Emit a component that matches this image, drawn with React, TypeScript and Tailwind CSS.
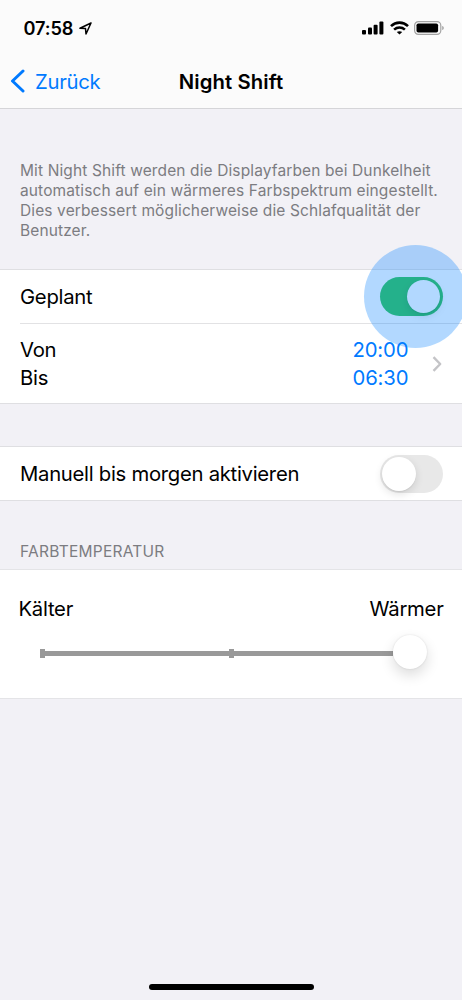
import { useState } from "react";
import clsx from "clsx";

function StatusBar() {
  return (
    <div className="flex h-[54px] items-center justify-between pt-[2px] pr-[17px] pl-[23.5px]">
      <div className="flex items-center gap-[6px]">
        <span className="text-[18.2px] leading-6 font-semibold tracking-[-0.1px]">07:58</span>
        <svg width="13" height="13" viewBox="0 0 13 13" fill="none" stroke="black" strokeWidth="1.5" strokeLinejoin="round">
          <path d="M12 1 L1 6.3 L6.5 6.6 L7 12 Z" />
        </svg>
      </div>
      <div className="flex items-center gap-[5.5px]">
        {/* Signal */}
        <svg width="22" height="14" viewBox="0 0 22 14" fill="black">
          <rect x="0" y="9" width="4" height="4.5" rx="1" />
          <rect x="6" y="6.5" width="4" height="7" rx="1" />
          <rect x="11.6" y="3.7" width="4" height="9.8" rx="1" />
          <rect x="17.4" y="0.5" width="4" height="13" rx="1" />
        </svg>
        {/* Wi-Fi */}
        <svg width="19" height="14" viewBox="0 0 19 14" fill="none" stroke="black" strokeWidth="2.6">
          <path d="M1 5.1 C5.8 0.5 13.2 0.5 18 5.1" />
          <path d="M4.1 8.6 C7.2 5.8 11.8 5.8 14.9 8.6" />
          <path d="M9.5 13.6 L6.8 11.1 C8.3 9.8 10.7 9.8 12.2 11.1 Z" fill="black" stroke="none" />
        </svg>
        {/* Battery */}
        <svg width="31" height="14" viewBox="0 0 31 14">
          <rect x="0.6" y="0.6" width="26.2" height="12.8" rx="3.8" fill="none" stroke="#a3a3a3" strokeWidth="1.2" />
          <rect x="2.5" y="2.4" width="21.6" height="9.2" rx="1.8" fill="black" />
          <path d="M28.2 5 C30.3 5.6 30.3 8.4 28.2 9 Z" fill="#a3a3a3" />
        </svg>
      </div>
    </div>
  );
}

function NavBar() {
  return (
    <div className="grid h-[54px] grid-cols-[1fr_auto_1fr] items-center pt-px">
      <button className="flex items-center gap-[10px] pl-[10px] text-[#007aff]">
        <svg className="mb-px" width="15" height="24" viewBox="0 0 15 24" fill="none" stroke="currentColor" strokeWidth="3" strokeLinecap="round" strokeLinejoin="round">
          <path d="M13 2 L2.5 12 L13 22" />
        </svg>
        <span className="text-[20.3px] leading-7 tracking-[-0.27px]">Zurück</span>
      </button>
      <h1 className="text-[20.3px] leading-7 font-semibold tracking-[0.1px]">Night Shift</h1>
    </div>
  );
}

function Toggle({ checked, label, onChange }: { checked: boolean; label: string; onChange: () => void }) {
  return (
    <button
      role="switch"
      aria-checked={checked}
      aria-label={label}
      onClick={onChange}
      className={clsx(
        "flex h-[38.5px] w-[63px] shrink-0 items-center rounded-full px-[2.5px]",
        checked ? "justify-end bg-[#34c759]" : "justify-start bg-[#e8e8e8]"
      )}
    >
      <span className="size-[33.5px] rounded-full bg-white shadow-[0_3px_8px_rgba(0,0,0,0.12),0_1px_1px_rgba(0,0,0,0.06)]" />
    </button>
  );
}

export default function App() {
  const [scheduled, setScheduled] = useState(true);
  const [manual, setManual] = useState(false);

  return (
    <div className="flex h-[1000px] w-[462px] flex-col overflow-hidden bg-[#f2f1f6] font-['Inter',sans-serif] text-black">
      <header className="h-[109px] border-b border-[#d5d5d8] bg-[#fbfbfb]">
        <StatusBar />
        <NavBar />
      </header>

      <p className="h-[160px] pt-[52.4px] pl-5 text-[15.5px] leading-[19.8px] tracking-[0.12px] whitespace-nowrap text-[#7c7c81]">
        Mit Night Shift werden die Displayfarben bei Dunkelheit
        <br />
        automatisch auf ein wärmeres Farbspektrum eingestellt.
        <br />
        Dies verbessert möglicherweise die Schlafqualität der
        <br />
        Benutzer.
      </p>

      <section className="border-y border-[#dfdfe2] bg-white text-[20.3px] tracking-[-0.27px]">
        <div className="relative ml-5 flex h-[54px] items-center justify-between border-b border-[#e2e2e4] pr-[19.5px]">
          <span className="pt-[2px]">Geplant</span>
          <Toggle label="Geplant" checked={scheduled} onChange={() => setScheduled(!scheduled)} />
          {/* Touch highlight */}
          <div className="pointer-events-none absolute top-[-25px] right-[-5px] size-[103px] rounded-full bg-[#0080ff]/30" />
        </div>
        <div className="flex h-[79px] items-center justify-between pr-[20px] pl-5 leading-[28px]">
          <div>
            <div>Von</div>
            <div>Bis</div>
          </div>
          <div className="flex items-center gap-[23.5px]">
            <div className="text-right tracking-[-0.1px] text-[#007aff]">
              <div>20:00</div>
              <div>06:30</div>
            </div>
            <svg width="10" height="16" viewBox="0 0 10 16" fill="none" stroke="#c4c4c7" strokeWidth="2.4" strokeLinejoin="round">
              <path d="M1.5 1.2 L8.2 8 L1.5 14.8" />
            </svg>
          </div>
        </div>
      </section>

      <section className="mt-[42px] flex h-[55px] items-center justify-between border-y border-[#dfdfe2] bg-white pt-px pr-[19.5px] pl-5 text-[20.3px] tracking-[-0.28px]">
        <span className="pt-px">Manuell bis morgen aktivieren</span>
        <Toggle label="Manuell bis morgen aktivieren" checked={manual} onChange={() => setManual(!manual)} />
      </section>

      <h2 className="h-[68px] pt-[41px] pl-5 text-[15.5px] leading-5 tracking-[0.25px] text-[#7c7c81]">FARBTEMPERATUR</h2>

      <section className="h-[130px] border-y border-[#e4e4e7] bg-white text-[20.3px]">
        <div className="flex justify-between pt-[25px] pr-[18.5px] pl-[18.5px] leading-7 tracking-[-0.27px]">
          <span>Kälter</span>
          <span>Wärmer</span>
        </div>
        <div className="mt-[13px] mr-[35px] ml-[40px] flex h-[34px] items-center">
          <div className="h-[9px] w-[5px] bg-[#999999]" />
          <div className="h-[5px] w-[183.5px] bg-[#999999]" />
          <div className="h-[9px] w-[5px] bg-[#999999]" />
          <div className="h-[5px] flex-1 bg-[#999999]" />
          <div className="mb-[3px] size-[34px] shrink-0 rounded-full bg-white shadow-[0_6px_14px_rgba(0,0,0,0.14),0_0_2px_rgba(0,0,0,0.12)]" />
        </div>
      </section>

      <div className="mx-auto mt-auto mb-[10px] h-[6px] w-[165px] rounded-full bg-black" />
    </div>
  );
}
